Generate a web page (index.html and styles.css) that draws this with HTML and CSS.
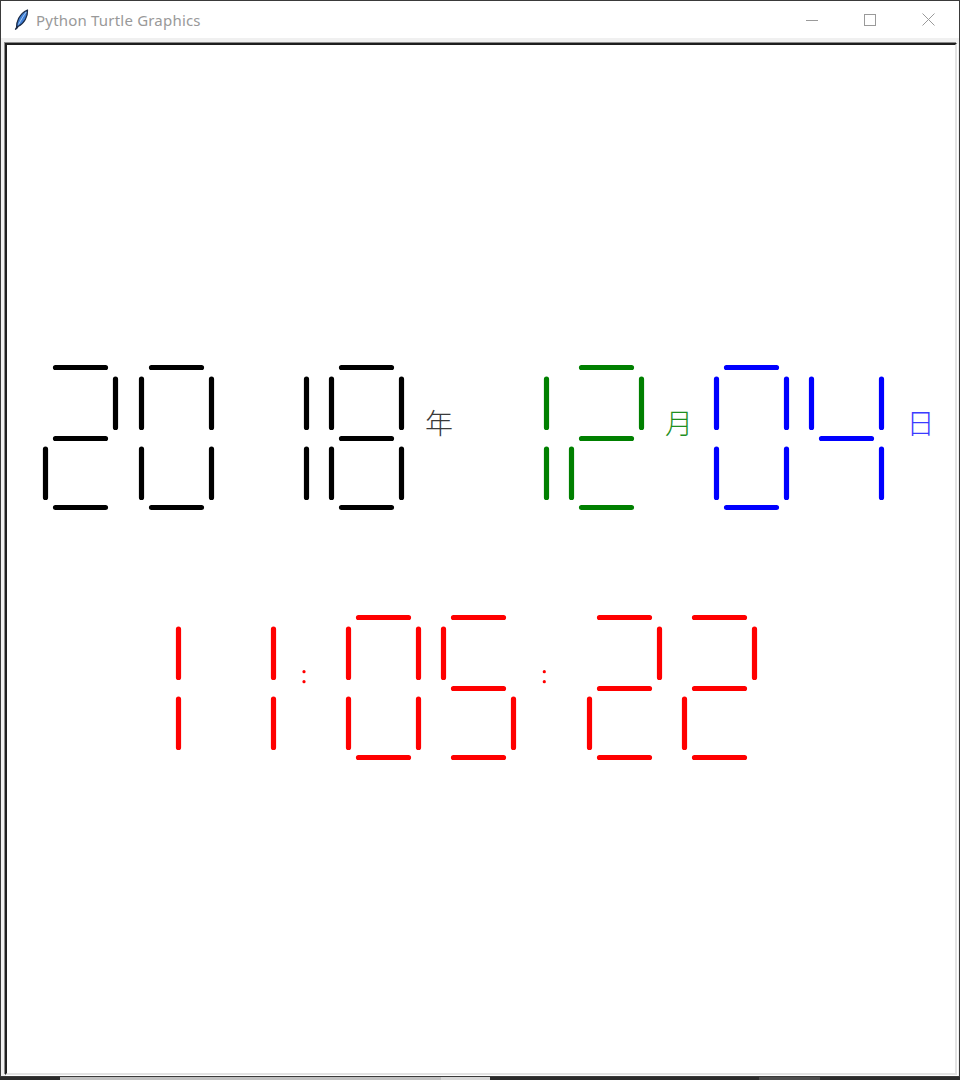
FILE: index.html
```html
<!DOCTYPE html>
<html lang="en">
<head>
<meta charset="utf-8">
<title>Python Turtle Graphics</title>
<link rel="stylesheet" href="styles.css">
</head>
<body>
<div class="window">
  <div class="titlebar">
    <svg class="app-icon" width="16" height="21" viewBox="0 0 16 21" aria-hidden="true">
      <path d="M2.5 19.5 C2.2 13 5 5 13.5 1 C13.8 7.5 10.5 14.5 4 17.5 Z" fill="#3f7fd6" stroke="#1b2b47" stroke-width="1.3" stroke-linejoin="round"/>
      <path d="M4.5 15.5 C7 11 9.5 6.5 12.2 3" fill="none" stroke="#a9cdf5" stroke-width="1"/>
      <path d="M3.4 17.6 L1.6 20.2" stroke="#1b2b47" stroke-width="1.4" stroke-linecap="round"/>
    </svg>
    <span class="title">Python Turtle Graphics</span>
    <div class="controls">
      <div class="ctrl">
        <svg width="12" height="12" viewBox="0 0 12 12"><path d="M0 6.5 H12" stroke="#9a9a9a" stroke-width="1"/></svg>
      </div>
      <div class="ctrl">
        <svg width="12" height="12" viewBox="0 0 12 12"><rect x="0.5" y="0.5" width="11" height="11" fill="none" stroke="#9a9a9a" stroke-width="1"/></svg>
      </div>
      <div class="ctrl">
        <svg width="13" height="13" viewBox="0 0 13 13"><path d="M0.5 0.5 L12.5 12.5 M12.5 0.5 L0.5 12.5" stroke="#9a9a9a" stroke-width="1"/></svg>
      </div>
    </div>
  </div>
  <div class="frame">
    <div class="canvas">
      <svg class="turtle" viewBox="7 45 948 1028" aria-label="Digital clock drawn with turtle">
        <g class="seg black">
          <path d="M55.5 367.5 H105.5 M115.5 379 V427.5 M55.5 438.5 H105.5 M45.5 449 V497.5 M55.5 507.5 H105.5"/>
          <path d="M151.5 367.5 H201.5 M211.5 379 V427.5 M211.5 449 V497.5 M151.5 507.5 H201.5 M141.5 449 V497.5 M141.5 379 V427.5"/>
          <path d="M306.5 379 V427.5 M306.5 449 V497.5"/>
          <path d="M341.5 367.5 H391.5 M401.5 379 V427.5 M401.5 449 V497.5 M341.5 507.5 H391.5 M331.5 449 V497.5 M331.5 379 V427.5 M341.5 438.5 H391.5"/>
        </g>
        <text class="label label-year" x="425" y="434">年</text>
        <g class="seg green">
          <path d="M546.5 379 V427.5 M546.5 449 V497.5"/>
          <path d="M581.5 367.5 H631.5 M641.5 379 V427.5 M581.5 438.5 H631.5 M571.5 449 V497.5 M581.5 507.5 H631.5"/>
        </g>
        <text class="label label-month" x="665" y="434">月</text>
        <g class="seg blue">
          <path d="M726.5 367.5 H776.5 M786.5 379 V427.5 M786.5 449 V497.5 M726.5 507.5 H776.5 M716.5 449 V497.5 M716.5 379 V427.5"/>
          <path d="M811.5 379 V427.5 M821.5 438.5 H871.5 M881.5 379 V427.5 M881.5 449 V497.5"/>
        </g>
        <text class="label label-day" x="906.5" y="434">日</text>
        <g class="seg red">
          <path d="M178.5 629 V677.5 M178.5 699 V747.5"/>
          <path d="M273.5 629 V677.5 M273.5 699 V747.5"/>
          <path d="M358.5 617.5 H408.5 M418.5 629 V677.5 M418.5 699 V747.5 M358.5 757.5 H408.5 M348.5 699 V747.5 M348.5 629 V677.5"/>
          <path d="M453.5 617.5 H503.5 M443.5 629 V677.5 M453.5 688.5 H503.5 M513.5 699 V747.5 M453.5 757.5 H503.5"/>
          <path d="M599.5 617.5 H649.5 M659.5 629 V677.5 M599.5 688.5 H649.5 M589.5 699 V747.5 M599.5 757.5 H649.5"/>
          <path d="M694.5 617.5 H744.5 M754.5 629 V677.5 M694.5 688.5 H744.5 M684.5 699 V747.5 M694.5 757.5 H744.5"/>
        </g>
        <g class="colon">
          <circle cx="304" cy="671.7" r="1.6"/>
          <circle cx="304" cy="681.7" r="1.6"/>
          <circle cx="544.3" cy="671.7" r="1.6"/>
          <circle cx="544.3" cy="681.7" r="1.6"/>
        </g>
      </svg>
    </div>
  </div>
</div>
<div class="desktop">
  <div class="strip s-dark s1"></div>
  <div class="strip s-light s2"></div>
  <div class="strip s-lighter s3"></div>
  <div class="strip s-dark s4"></div>
  <div class="strip s-mid s5"></div>
  <div class="strip s-dark s6"></div>
</div>
</body>
</html>
```
FILE: styles.css
```css
* {
  box-sizing: border-box;
}

html, body {
  margin: 0;
  padding: 0;
}

body {
  width: 960px;
  height: 1080px;
  background: #2b2b2b;
  overflow: hidden;
  font-family: "Noto Sans", "Open Sans", sans-serif;
}

.window {
  width: 960px;
  height: 1077px;
  border: 1px solid #3a3a3a;
  background: #f0f0f0;
  display: flex;
  flex-direction: column;
}

.titlebar {
  height: 37px;
  flex: none;
  background: #ffffff;
  display: flex;
  align-items: center;
}

.app-icon {
  display: block;
  margin-left: 13px;
  margin-top: -1px;
}

.title {
  margin-left: 6px;
  font-size: 15px;
  color: #999999;
  letter-spacing: 0.2px;
  line-height: 20px;
  margin-top: 1px;
}

.controls {
  margin-left: auto;
  display: flex;
  height: 100%;
  padding-right: 2px;
}

.ctrl {
  width: 58px;
  height: 100%;
  display: flex;
  align-items: center;
  justify-content: center;
}

.ctrl svg {
  display: block;
}

.frame {
  flex: 1;
  display: flex;
  padding: 5px 2px 1px 4px;
}

.canvas {
  flex: 1;
  background: #ffffff;
  border-style: solid;
  border-width: 2px;
  border-top-color: #1e1e1e;
  border-left-color: #1e1e1e;
  border-right-color: #e3e3e3;
  border-bottom-color: #e3e3e3;
  box-shadow: -1px -1px 0 #8a8a8a, 1px 1px 0 #ffffff;
}

.turtle {
  display: block;
  width: 948px;
  height: 1028px;
}

.seg path {
  fill: none;
  stroke-width: 5.2;
  stroke-linecap: round;
}

.black path { stroke: #000000; }
.green path { stroke: #008000; }
.blue path { stroke: #0000ff; }
.red path { stroke: #ff0000; }

.colon circle {
  fill: #ff0000;
}

.label {
  font-family: "Noto Sans CJK SC", "Noto Sans CJK JP", sans-serif;
  font-size: 28px;
  font-weight: 300;
}

.label-year { fill: #3a3a3a; }
.label-month { fill: #1f8f1f; }
.label-day { fill: #3b3bff; }

.desktop {
  display: flex;
  height: 3px;
}

.strip {
  height: 100%;
}

.s-dark { background: #2b2b2b; }
.s-light { background: #bfbfbf; }
.s-lighter { background: #d6d6d6; }
.s-mid { background: #4d4d4d; }

.s1 { width: 60px; }
.s2 { width: 381px; }
.s3 { width: 49px; }
.s4 { width: 269px; }
.s5 { width: 61px; }
.s6 { flex: 1; }
```
